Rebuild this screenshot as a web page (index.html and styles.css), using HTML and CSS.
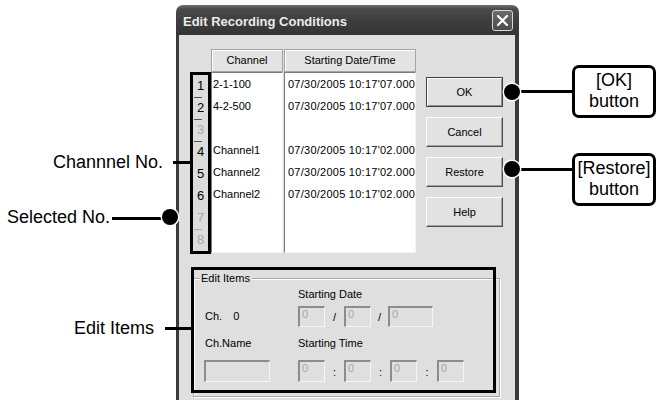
FILE: index.html
```html
<!DOCTYPE html>
<html lang="en">
<head>
  <meta charset="UTF-8">
  <meta name="viewport" content="width=device-width, initial-scale=1.0">
  <title>Edit Recording Conditions</title>
  <link rel="stylesheet" href="styles.css">
</head>
<body>
  <div class="sheet">
    <div class="notes-left">
      <div class="note note-channel">
        <span class="note-text">Channnel No.</span>
        <span class="lead"></span>
      </div>
      <div class="note note-selected">
        <span class="note-text">Selected No.</span>
        <span class="lead"></span>
        <span class="dot"></span>
      </div>
      <div class="note note-edit">
        <span class="note-text">Edit Items</span>
        <span class="lead"></span>
      </div>
    </div>

    <div class="dialog">
      <div class="titlebar">
        <span class="title">Edit Recording Conditions</span>
        <span class="close">
          <svg width="13" height="13" viewBox="0 0 13 13"><path d="M2 2L11 11M11 2L2 11" stroke="#fff" stroke-width="2.2" stroke-linecap="round"/></svg>
        </span>
      </div>
      <div class="dialog-body">
        <div class="top">
          <div class="numcol">
            <div class="num">1</div>
            <div class="num sep">2</div>
            <div class="num sep off">3</div>
            <div class="num sep">4</div>
            <div class="num">5</div>
            <div class="num">6</div>
            <div class="num off">7</div>
            <div class="num sep-light off">8</div>
          </div>

          <div class="list list-channel">
            <div class="list-head">Channel</div>
            <div class="list-body">
              <div class="row">2-1-100</div>
              <div class="row">4-2-500</div>
              <div class="row"></div>
              <div class="row">Channel1</div>
              <div class="row">Channel2</div>
              <div class="row">Channel2</div>
            </div>
          </div>

          <div class="list list-date">
            <div class="list-head">Starting Date/Time</div>
            <div class="list-body">
              <div class="row">07/30/2005 10:17'07.000</div>
              <div class="row">07/30/2005 10:17'07.000</div>
              <div class="row"></div>
              <div class="row">07/30/2005 10:17'02.000</div>
              <div class="row">07/30/2005 10:17'02.000</div>
              <div class="row">07/30/2005 10:17'02.000</div>
            </div>
          </div>

          <div class="buttons">
            <div class="btn default">OK</div>
            <div class="btn">Cancel</div>
            <div class="btn">Restore</div>
            <div class="btn">Help</div>
          </div>
        </div>

        <div class="groupbox">
          <div class="group-title">Edit Items</div>
          <div class="group-grid">
            <div class="cell-label c2">Starting Date</div>
            <div class="ch-no"><span>Ch.</span><span class="ch-val">0</span></div>
            <div class="fields">
              <div class="field">0</div>
              <span class="sep-char w19">/</span>
              <div class="field">0</div>
              <span class="sep-char w17">/</span>
              <div class="field wide">0</div>
            </div>
            <div class="cell-label">Ch.Name</div>
            <div class="cell-label">Starting Time</div>
            <div class="field name"></div>
            <div class="fields">
              <div class="field">0</div>
              <span class="sep-char w19">:</span>
              <div class="field">0</div>
              <span class="sep-char w19">:</span>
              <div class="field">0</div>
              <span class="sep-char w20">:</span>
              <div class="field">0</div>
            </div>
          </div>
          <div class="frame"></div>
        </div>
      </div>
    </div>

    <div class="notes-right">
      <div class="callout callout-ok">
        <span class="dot"></span>
        <span class="lead"></span>
        <div class="callout-box">[OK]<br>button</div>
      </div>
      <div class="callout callout-restore">
        <span class="dot"></span>
        <span class="lead"></span>
        <div class="callout-box">[Restore]<br>button</div>
      </div>
    </div>
  </div>
</body>
</html>
```

FILE: styles.css
```css
html, body {
  margin: 0;
  height: 100%;
  overflow: hidden;
}
body {
  background: #fff;
  color: #000;
  font-family: "Liberation Sans", Arial, sans-serif;
}
.sheet {
  display: flex;
  align-items: flex-start;
  width: 656px;
  height: 400px;
  overflow: hidden;
}

/* annotations on the left */
.notes-left {
  flex: none;
  width: 176px;
  padding-top: 152px;
  display: flex;
  flex-direction: column;
}
.note {
  display: flex;
  align-items: center;
  justify-content: flex-end;
  height: 20px;
  font-size: 18px;
  line-height: 20px;
  white-space: nowrap;
}
.note-selected { margin-top: 35px; }
.note-edit { margin-top: 91px; }
.lead {
  position: relative;
  z-index: 2;
  flex: none;
  height: 3px;
  background: #000;
}
.note-channel .lead { width: 18px; margin-left: 10px; margin-right: -15px; }
.note-selected .lead { width: 52px; margin-left: 2px; margin-top: 2px; }
.note-selected .dot { margin-left: -2px; margin-right: -2px; }
.note-edit .lead { width: 26px; margin-left: 11px; margin-right: -15px; }
.dot {
  position: relative;
  z-index: 3;
  flex: none;
  width: 16px;
  height: 16px;
  border-radius: 50%;
  background: #000;
  box-shadow: 0 0 0 1.5px #fff;
}

/* the dialog */
.dialog {
  flex: none;
  width: 343px;
  margin-top: 5px;
}
.titlebar {
  height: 30px;
  box-sizing: border-box;
  display: flex;
  align-items: center;
  justify-content: space-between;
  padding: 0 6px 0 7px;
  border-radius: 7px 7px 0 0;
  background: linear-gradient(#727272, #4a4a4a 4px, #3c3c3c 60%, #353535);
}
.title {
  padding-top: 2px;
  color: #ececec;
  font-size: 13px;
  font-weight: bold;
}
.close {
  width: 19px;
  height: 19px;
  display: flex;
  align-items: center;
  justify-content: center;
  border: 1px solid #d8d8d8;
  border-radius: 3px;
  background: linear-gradient(#6c6c6c, #4a4a4a);
}
.dialog-body {
  height: 365px;
  background: #dfdfdf;
  border-left: 3px solid #3a3a3a;
  border-right: 4px solid #3a3a3a;
  font-size: 11px;
  line-height: 13px;
}
.top {
  display: flex;
  align-items: flex-start;
  padding: 14px 0 0 11px;
}
.numcol {
  flex: none;
  width: 15px;
  margin-top: 23px;
  border: 3px solid #000;
  background: #dcdcdc;
}
.num {
  height: 22px;
  line-height: 22px;
  text-align: center;
  font-size: 13px;
}
.num.sep { background: linear-gradient(#555, #555) 1px 0 / 8px 1px no-repeat; }
.num.sep-light { background: linear-gradient(#aaa, #aaa) 1px 0 / 8px 1px no-repeat; }
.num.off { color: #a9a9a9; }

.list { flex: none; }
.list-channel { width: 72px; }
.list-date { width: 132px; margin-left: 1px; }
.list-head {
  height: 21px;
  line-height: 21px;
  text-align: center;
  background: #e3e3e3;
  border: 1px solid #a3a3a3;
  box-shadow: inset 1px 1px #fff;
}
.list-body {
  height: 179px;
  background: #fff;
  border: 1px solid;
  border-color: #7b7b7b #f4f4f4 #f4f4f4 #7b7b7b;
}
.row {
  height: 22px;
  line-height: 22px;
  padding-left: 1px;
  white-space: nowrap;
}
.list-date .row {
  padding-left: 3px;
  letter-spacing: .25px;
}

.buttons {
  flex: none;
  display: flex;
  flex-direction: column;
  gap: 10px;
  margin: 28px 0 0 10px;
}
.btn {
  width: 77px;
  height: 30px;
  box-sizing: border-box;
  display: flex;
  align-items: center;
  justify-content: center;
  background: #e2e2e2;
  border: 1px solid;
  border-color: #fdfdfd #505050 #505050 #fdfdfd;
  box-shadow: inset -1px -1px #a0a0a0;
}
.btn.default {
  border-color: #404040;
  box-shadow: inset 1px 1px #fff, inset -1px -1px #909090;
}

/* Edit Items group */
.groupbox {
  position: relative;
  width: 305px;
  height: 117px;
  margin: 24px 0 0 14px;
  border: 1px solid #a8a8a8;
  box-shadow: inset 1px 1px #fff, 1px 1px #fff;
}
.group-title {
  width: fit-content;
  margin: -7px 0 0 6px;
  padding: 0 2px 0 1px;
  background: #dfdfdf;
}
.group-grid {
  display: grid;
  grid-template-columns: 93px auto;
  grid-template-rows: 18px 31px 23px 22px;
  margin-top: 3px;
  padding-left: 11px;
}
.c2 { grid-column: 2; }
.ch-no { line-height: 21px; }
.ch-val { margin-left: 11px; }
.fields {
  display: flex;
  align-items: center;
  height: 21px;
}
.field {
  box-sizing: border-box;
  flex: none;
  width: 27px;
  height: 21px;
  padding-left: 2px;
  border-style: solid;
  border-width: 2px 1px 1px 2px;
  border-color: #8c8c8c #f6f6f6 #f6f6f6 #8c8c8c;
  color: #a6a6a6;
}
.field.wide { width: 45px; }
.field.name { width: 66px; height: 22px; margin-left: -1px; }
.group-grid .fields:last-child { height: 22px; }
.group-grid .fields:last-child .field { height: 22px; }
.sep-char { text-align: center; padding-top: 2px; }
.w17 { width: 17px; }
.w19 { width: 19px; }
.w20 { width: 20px; }
.frame {
  position: absolute;
  left: -3px;
  top: -12px;
  width: 299px;
  height: 120px;
  border: 3px solid #000;
}

/* annotations on the right */
.notes-right {
  flex: none;
  padding-top: 65px;
  display: flex;
  flex-direction: column;
}
.callout {
  display: flex;
  align-items: center;
}
.callout .dot { margin-left: -15px; }
.callout .lead { width: 52px; }
.callout-box {
  flex: none;
  width: 78px;
  padding: 2px 0 3px;
  border: 3px solid #000;
  border-radius: 7px;
  font-size: 18px;
  line-height: 21px;
  text-align: center;
}
.callout-restore {
  margin-top: 35px;
  align-items: flex-start;
}
.callout-restore .dot { margin-top: 8px; }
.callout-restore .lead { margin-top: 15px; }
```
